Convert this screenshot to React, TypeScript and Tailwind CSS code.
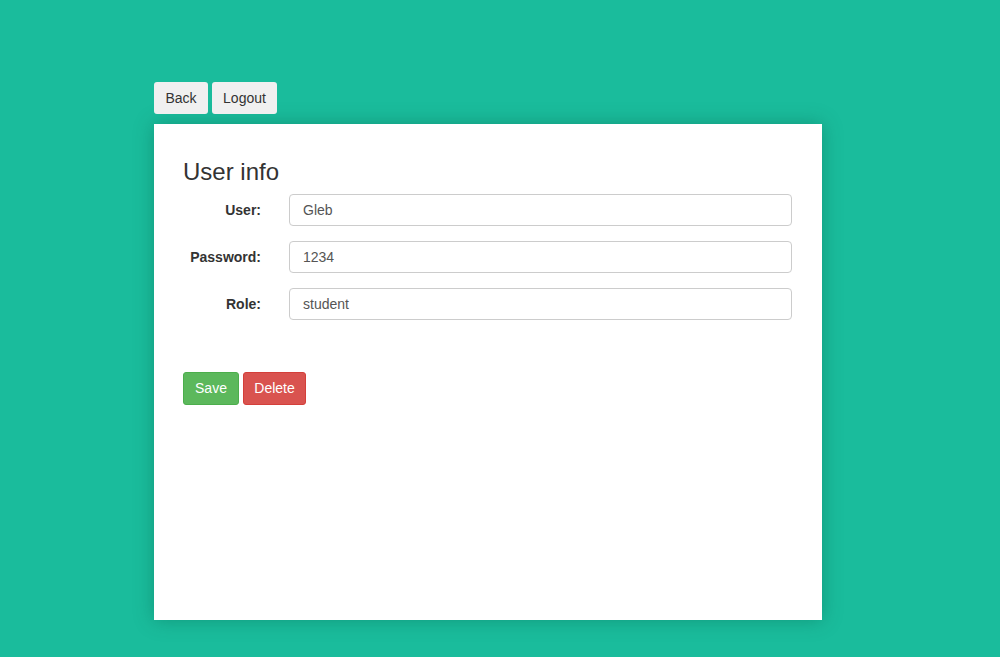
export default function App() {
  const fields = [
    { label: 'User:', value: 'Gleb' },
    { label: 'Password:', value: '1234' },
    { label: 'Role:', value: 'student' },
  ];

  return (
    <div className="min-h-[657px] w-full bg-[#1abc9c] font-['Liberation_Sans',Arial,sans-serif] text-[14px] text-[#333]">
      <div className="pl-[154px] pt-[82px]">
        <div className="flex gap-[4px]">
          <button className="h-[32px] w-[54px] rounded-[3px] bg-[#f0f0f0] text-[14px] text-[#333]">Back</button>
          <button className="h-[32px] w-[65px] rounded-[3px] bg-[#f0f0f0] text-[14px] text-[#333]">Logout</button>
        </div>
        <div className="mt-[10px] h-[496px] w-[668px] bg-white px-[29px] pt-[32px] shadow-[0_0_18px_rgba(0,80,60,0.35)]">
          <h2 className="text-[24px] leading-[32px] text-[#333]">User info</h2>
          <div className="mt-[6px] flex flex-col gap-[15px]">
            {fields.map((f) => (
              <div key={f.label} className="flex items-center">
                <label className="w-[78px] text-right font-bold text-[#333]">{f.label}</label>
                <input
                  readOnly
                  value={f.value}
                  className="ml-[28px] h-[32px] w-[503px] rounded-[4px] border border-[#ccc] px-[13px] text-[14px] text-[#555] outline-none"
                />
              </div>
            ))}
          </div>
          <div className="mt-[52px] flex gap-[4px]">
            <button className="h-[33px] w-[56px] rounded-[3px] border border-[#4cae4c] bg-[#5cb85c] text-[14px] text-white">Save</button>
            <button className="h-[33px] w-[63px] rounded-[3px] border border-[#d43f3a] bg-[#d9534f] text-[14px] text-white">Delete</button>
          </div>
        </div>
      </div>
    </div>
  );
}
